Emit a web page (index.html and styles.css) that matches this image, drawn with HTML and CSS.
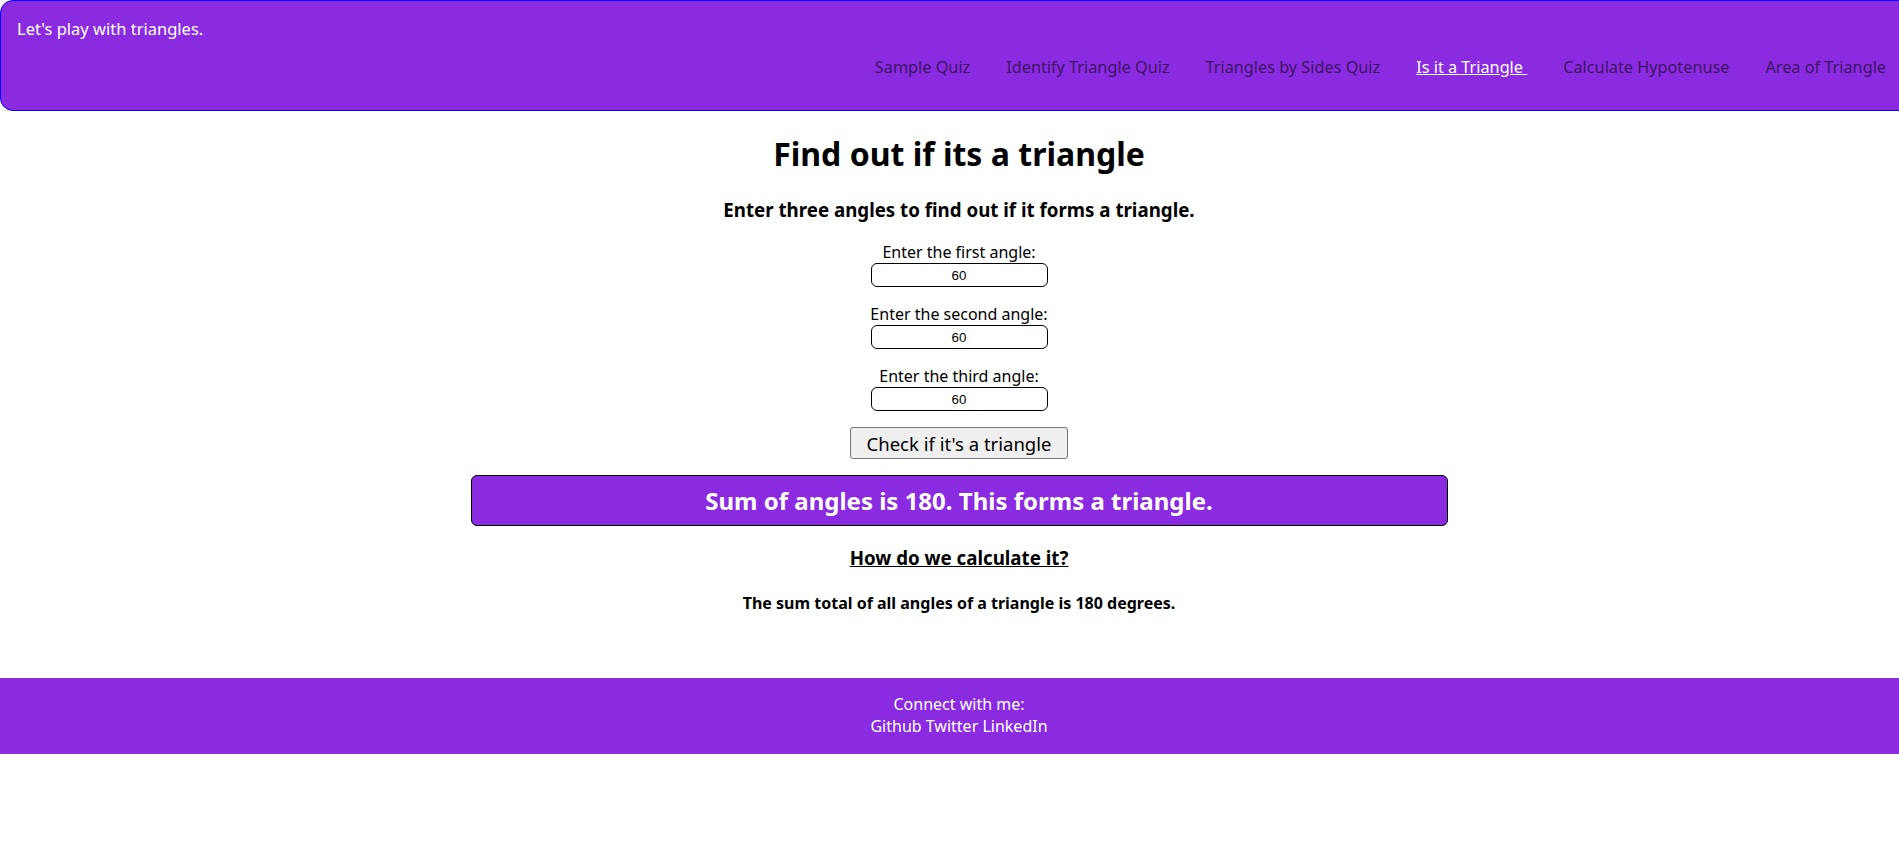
FILE: index.html
```html
<!DOCTYPE html>
<html lang="en">
<head>
<meta charset="utf-8">
<title>Is it a Triangle</title>
<link rel="stylesheet" href="styles.css">
</head>
<body>
<div class="page">
  <header class="topbar">
    <div class="brand">Let's play with triangles.</div>
    <nav>
      <ul class="nav-list">
        <li><a class="nav-link" href="#">Sample Quiz</a></li>
        <li><a class="nav-link" href="#">Identify Triangle Quiz</a></li>
        <li><a class="nav-link" href="#">Triangles by Sides Quiz</a></li>
        <li><a class="nav-link active" href="#">Is it a Triangle&nbsp;</a></li>
        <li><a class="nav-link" href="#">Calculate Hypotenuse</a></li>
        <li><a class="nav-link" href="#">Area of Triangle</a></li>
      </ul>
    </nav>
  </header>

  <main class="content">
    <h1 class="title">Find out if its a triangle</h1>
    <h3 class="subtitle">Enter three angles to find out if it forms a triangle.</h3>

    <div class="field">
      <label class="field-label" for="a1">Enter the first angle:</label>
      <input class="angle-input" id="a1" type="number" value="60">
    </div>
    <div class="field">
      <label class="field-label" for="a2">Enter the second angle:</label>
      <input class="angle-input" id="a2" type="number" value="60">
    </div>
    <div class="field">
      <label class="field-label" for="a3">Enter the third angle:</label>
      <input class="angle-input" id="a3" type="number" value="60">
    </div>

    <button class="check-btn" type="button">Check if it's a triangle</button>

    <div class="result">
      <h2 class="result-text">Sum of angles is 180. This forms a triangle.</h2>
    </div>

    <h3 class="how">How do we calculate it?</h3>
    <h4 class="explain">The sum total of all angles of a triangle is 180 degrees.</h4>
  </main>

  <footer class="footer">
    <div class="footer-line">Connect with me:</div>
    <div class="footer-line">
      <a class="footer-link" href="#">Github</a>
      <a class="footer-link" href="#">Twitter</a>
      <a class="footer-link" href="#">LinkedIn</a>
    </div>
  </footer>
</div>
</body>
</html>
```

FILE: styles.css
```css
html, body {
  margin: 0;
  padding: 0;
}

body {
  overflow-x: hidden;
  font-family: "Noto Sans", "Open Sans", sans-serif;
  color: #000;
  background: #fff;
}

.page {
  width: 1918px;
}

.topbar {
  background: #8a2be2;
  border: 1px solid #0000ff;
  border-radius: 13px;
  padding: 17px 13px 0 16px;
  height: 92px;
}

.brand {
  color: #fff;
  font-size: 16.5px;
  line-height: 22px;
}

.nav-list {
  list-style: none;
  margin: 16px 0 0;
  padding: 0;
  display: flex;
  justify-content: flex-end;
}

.nav-link {
  display: block;
  padding: 0 18px;
  font-size: 16.25px;
  line-height: 22px;
  color: #3d1563;
  text-decoration: none;
}

.nav-link.active {
  color: #fff;
  text-decoration: underline;
}

.content {
  display: flex;
  flex-direction: column;
  align-items: center;
  text-align: center;
  padding-bottom: 63.5px;
}

.title {
  font-size: 32px;
  font-weight: 700;
  line-height: 44px;
  margin: 21px 0 21px;
}

.subtitle {
  font-size: 18.72px;
  font-weight: 700;
  line-height: 25px;
  margin: 0 0 19px;
}

.field {
  display: flex;
  flex-direction: column;
  align-items: center;
}

.field + .field {
  margin-top: 16px;
}

.field-label {
  font-size: 16px;
  line-height: 22px;
}

.angle-input {
  box-sizing: border-box;
  width: 177px;
  height: 24px;
  border: 1px solid #000;
  border-radius: 6px;
  text-align: center;
  font-family: "Liberation Sans", Arial, sans-serif;
  font-size: 13.33px;
  padding: 1px 2px;
  -moz-appearance: textfield;
}

.angle-input::-webkit-outer-spin-button,
.angle-input::-webkit-inner-spin-button {
  -webkit-appearance: none;
  margin: 0;
}

.check-btn {
  box-sizing: border-box;
  margin-top: 16px;
  height: 32px;
  padding: 0 16px;
  font-family: "Noto Sans", sans-serif;
  font-size: 18.5px;
  background: #efefef;
  border: 1px solid #767676;
  border-radius: 3px;
  color: #000;
}

.result {
  box-sizing: border-box;
  margin-top: 16px;
  width: 977px;
  height: 51px;
  background: #8a2be2;
  border: 1px solid #000;
  border-radius: 6px;
  display: flex;
  align-items: center;
  justify-content: center;
}

.result-text {
  margin: 0;
  color: #fff;
  font-size: 24px;
  font-weight: 700;
  line-height: 32px;
}

.how {
  margin: 19px 0 0;
  font-size: 18.72px;
  font-weight: 700;
  line-height: 25px;
  text-decoration: underline;
}

.explain {
  margin: 22px 0 0;
  font-size: 16px;
  font-weight: 700;
  line-height: 22px;
}

.footer {
  background: #8a2be2;
  color: #fff;
  text-align: center;
  padding: 15px 0 16px;
  font-size: 16px;
  line-height: 22.5px;
}

.footer-link {
  color: #fff;
  text-decoration: none;
}
```
